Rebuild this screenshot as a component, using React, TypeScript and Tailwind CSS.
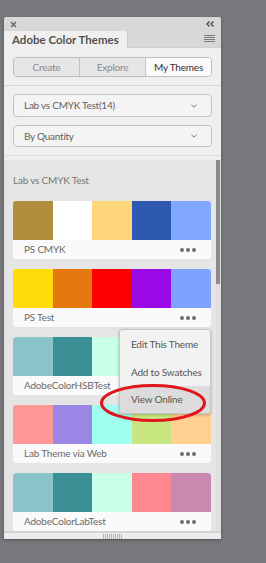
import React from 'react';

type Theme = { name: string; colors: string[] };

const themes: Theme[] = [
  { name: 'PS CMYK', colors: ['#b08e3e', '#ffffff', '#ffd67a', '#2f58b0', '#80a8ff'] },
  { name: 'PS Test', colors: ['#ffdc0a', '#e6780f', '#ff0000', '#9a0ae6', '#7fa2ff'] },
  { name: 'AdobeColorHSBTest', colors: ['#8ac4c8', '#3a9095', '#c8ffe6', '#ff8890', '#c888b0'] },
  { name: 'Lab Theme via Web', colors: ['#ff9797', '#9b86e6', '#a0fff0', '#c8e680', '#ffd090'] },
  { name: 'AdobeColorLabTest', colors: ['#8ac4c8', '#3a9095', '#c8ffe6', '#ff8890', '#c888b0'] },
];

function Chevron() {
  return (
    <svg width="6" height="4" viewBox="0 0 6 4" className="mr-[2px]">
      <path d="M0.5 0.8 L3 3.2 L5.5 0.8" fill="none" stroke="#777" strokeWidth="1" />
    </svg>
  );
}

function Dots() {
  return (
    <div className="flex gap-[2px]">
      <span className="w-[4px] h-[4px] rounded-full bg-[#6e6e6e]" />
      <span className="w-[4px] h-[4px] rounded-full bg-[#6e6e6e]" />
      <span className="w-[4px] h-[4px] rounded-full bg-[#6e6e6e]" />
    </div>
  );
}

function ThemeCard({ theme }: { theme: Theme }) {
  return (
    <div className="w-[198px] h-[58px] rounded-[3px] bg-[#fafafa] overflow-hidden shrink-0">
      <div className="flex h-[39px]">
        {theme.colors.map((c, i) => (
          <div key={i} className="flex-1" style={{ backgroundColor: c }} />
        ))}
      </div>
      <div className="h-[19px] flex items-center justify-between pl-[11px] pr-[15px] text-[10px] tracking-[-0.2px] text-[#6a6a6a] whitespace-nowrap">
        <span>{theme.name}</span>
        <Dots />
      </div>
    </div>
  );
}

export default function App() {
  return (
    <div
      className="w-[266px] h-[563px] bg-[#77787c] pt-[17px] pl-[4px] relative overflow-hidden"
      style={{ fontFamily: 'Lato, "Open Sans", sans-serif' }}
    >
      <div className="w-[217px] h-[522px] bg-[#efefef] rounded-t-[3px] flex flex-col overflow-hidden shadow-[0_1px_3px_rgba(0,0,0,0.35)]">
        {/* title bar */}
        <div className="h-[14px] bg-[#d8d8d8] flex items-center justify-between pl-[6px] pr-[7px] shrink-0">
          <svg width="7" height="7" viewBox="0 0 7 7">
            <path d="M1 1 L6 6 M6 1 L1 6" stroke="#6a6a6a" strokeWidth="1.6" />
          </svg>
          <svg width="8" height="6" viewBox="0 0 8 6">
            <path d="M3.5 0.5 L1 3 L3.5 5.5 M7.5 0.5 L5 3 L7.5 5.5" fill="none" stroke="#444" strokeWidth="1.3" />
          </svg>
        </div>
        {/* tab row */}
        <div className="h-[17px] flex shrink-0">
          <div className="w-[123px] bg-[#efefef] flex items-center pl-[8px] text-[11.5px] font-bold text-[#525252] whitespace-nowrap">
            Adobe Color Themes
          </div>
          <div className="flex-1 bg-[#d8d8d8] border-l border-[#c9c9c9] border-b border-b-[#cfcfcf] flex items-center justify-end pr-[6px]">
            <svg width="11" height="8" viewBox="0 0 11 8">
              <path d="M0 0.5 H11 M0 2.5 H11 M0 4.5 H11 M0 6.5 H11" stroke="#7a7a7a" strokeWidth="1" />
            </svg>
          </div>
        </div>
        {/* segmented */}
        <div className="px-[9px] pt-[9px] shrink-0">
          <div className="h-[20px] flex rounded-[4px] border border-[#bdbdbd] overflow-hidden text-[10px] tracking-[-0.2px]">
            <div className="flex-1 flex items-center justify-center bg-[#e6e6e6] text-[#8a8a8a] border-r border-[#c4c4c4]">Create</div>
            <div className="flex-1 flex items-center justify-center bg-[#e6e6e6] text-[#8a8a8a] border-r border-[#c4c4c4]">Explore</div>
            <div className="flex-1 flex items-center justify-center bg-[#fafafa] text-[#333]">My Themes</div>
          </div>
        </div>
        <div className="h-px bg-[#d6d6d6] mt-[8px] shrink-0" />
        {/* dropdowns */}
        <div className="px-[9px] pt-[8px] flex flex-col gap-[8px] shrink-0">
          <div className="h-[23px] rounded-[4px] border border-[#c2c2c2] bg-[#f4f4f4] flex items-center justify-between pl-[10px] pr-[12px] text-[10px] tracking-[-0.25px] text-[#5e5e5e]">
            <span>Lab vs CMYK Test(14)</span>
            <Chevron />
          </div>
          <div className="h-[22px] rounded-[4px] border border-[#c2c2c2] bg-[#f4f4f4] flex items-center justify-between pl-[10px] pr-[12px] text-[10px] tracking-[-0.25px] text-[#5e5e5e]">
            <span>By Quantity</span>
            <Chevron />
          </div>
        </div>
        <div className="h-px bg-[#dcdcdc] mt-[8px] shrink-0" />
        {/* list */}
        <div className="mt-[4px] flex-1 flex min-h-0">
          <div className="flex-1 bg-[#e5e5e5] pl-[9px] pt-[12px] overflow-hidden">
            <div className="h-[16px] leading-[16px] text-[10px] tracking-[-0.2px] text-[#777] mb-[13px]">Lab vs CMYK Test</div>
            <div className="flex flex-col gap-[10px]">
              {themes.map((t) => (
                <ThemeCard key={t.name} theme={t} />
              ))}
            </div>
          </div>
          <div className="w-[5px] bg-[#e0e0e0] pr-[1px]">
            <div className="h-[124px] w-[4px] bg-[#8a8a8a]" />
          </div>
        </div>
        {/* gripper */}
        <div className="h-[8px] bg-[#ececec] border-t-2 border-[#d4d4d4] flex items-center justify-center shrink-0">
          <svg width="20" height="5" viewBox="0 0 20 5">
            <path d="M0.5 0 V5 M2.5 0 V5 M4.5 0 V5 M6.5 0 V5 M8.5 0 V5 M10.5 0 V5 M12.5 0 V5 M14.5 0 V5 M16.5 0 V5 M18.5 0 V5" stroke="#b4b4b4" strokeWidth="1" />
          </svg>
        </div>
      </div>

      {/* context menu */}
      <div className="absolute left-[119px] top-[329px] w-[92px] h-[85px] bg-[#f2f2f2] border border-[#c6c6c6] rounded-[3px] shadow-[0_1px_3px_rgba(0,0,0,0.25)] flex flex-col text-[10px] tracking-[-0.2px] text-[#555] overflow-hidden whitespace-nowrap">
        <div className="h-[28px] flex items-center pl-[11px]">Edit This Theme</div>
        <div className="h-[28px] flex items-center pl-[11px]">Add to Swatches</div>
        <div className="flex-1 flex items-center pl-[11px] bg-[#dcdcdc]">View Online</div>
      </div>

      {/* red annotation ellipse */}
      <svg className="absolute left-[99px] top-[383px]" width="108" height="40" viewBox="0 0 108 40">
        <ellipse cx="54" cy="20" rx="51.5" ry="17.5" fill="none" stroke="#e0161c" strokeWidth="3" />
      </svg>
    </div>
  );
}
